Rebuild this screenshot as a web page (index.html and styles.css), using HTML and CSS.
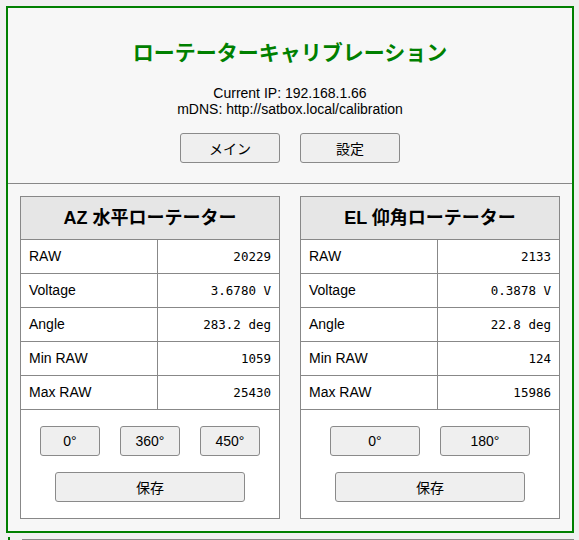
FILE: index.html
```html
<!DOCTYPE html>
<html lang="ja">
<head>
  <meta charset="UTF-8">
  <meta name='viewport' content='width=device-width, initial-scale=1' />

  <title>ローテーターキャリブレーション</title>

  <link rel="stylesheet" href="styles.css">
</head>
<body>

  <div class="Calib">
    <div class="Calib__head">
      <h1 class="Calib__title">ローテーターキャリブレーション</h1>
      <p class="Calib__info">Current IP: 192.168.1.66<br>mDNS: http://satbox.local/calibration</p>
      <div class="Calib__nav">
        <button class="Btn Btn--nav">メイン</button>
        <button class="Btn Btn--nav">設定</button>
      </div>
    </div>

    <div class="Calib__panels">
      <div class="Rotor">
        <div class="Rotor__title">AZ 水平ローテーター</div>
        <div class="Rotor__row"><span class="Rotor__label">RAW</span><span class="Rotor__value">20229</span></div>
        <div class="Rotor__row"><span class="Rotor__label">Voltage</span><span class="Rotor__value">3.6780 V</span></div>
        <div class="Rotor__row"><span class="Rotor__label">Angle</span><span class="Rotor__value">283.2 deg</span></div>
        <div class="Rotor__row"><span class="Rotor__label">Min RAW</span><span class="Rotor__value">1059</span></div>
        <div class="Rotor__row"><span class="Rotor__label">Max RAW</span><span class="Rotor__value">25430</span></div>
        <div class="Rotor__actions">
          <div class="Rotor__presets">
            <button class="Btn Btn--preset">0°</button>
            <button class="Btn Btn--preset">360°</button>
            <button class="Btn Btn--preset">450°</button>
          </div>
          <button class="Btn Btn--save">保存</button>
        </div>
      </div>

      <div class="Rotor">
        <div class="Rotor__title">EL 仰角ローテーター</div>
        <div class="Rotor__row"><span class="Rotor__label">RAW</span><span class="Rotor__value">2133</span></div>
        <div class="Rotor__row"><span class="Rotor__label">Voltage</span><span class="Rotor__value">0.3878 V</span></div>
        <div class="Rotor__row"><span class="Rotor__label">Angle</span><span class="Rotor__value">22.8 deg</span></div>
        <div class="Rotor__row"><span class="Rotor__label">Min RAW</span><span class="Rotor__value">124</span></div>
        <div class="Rotor__row"><span class="Rotor__label">Max RAW</span><span class="Rotor__value">15986</span></div>
        <div class="Rotor__actions">
          <div class="Rotor__presets">
            <button class="Btn Btn--preset Btn--wide">0°</button>
            <button class="Btn Btn--preset Btn--wide">180°</button>
          </div>
          <button class="Btn Btn--save">保存</button>
        </div>
      </div>
    </div>
  </div>

  <div class="Log">
    <div class="Log__box"></div>
  </div>

</body>
</html>
```

FILE: styles.css
```css
*,
*::before,
*::after {
  box-sizing: border-box;
}
html, body {
  padding: 0;
}
body {
  margin: 6px 5px 0 6px;
  background-color: #f0f0f0;
  font-family: "Liberation Sans", "Noto Sans CJK JP", sans-serif;
  font-size: 14px;
  color: #000;
  overflow: hidden;
}

.Calib {
  border: 2px solid #008000;
  background-color: #f7f7f7;
}
.Calib__head {
  padding: 30px 0 20px;
  border-bottom: 1px solid #888;
  text-align: center;
}
.Calib__title {
  margin: 0;
  font-size: 21px;
  line-height: 30px;
  font-weight: bold;
  color: #008000;
}
.Calib__info {
  margin: 17px 0 0;
  line-height: 16px;
}
.Calib__nav {
  display: flex;
  justify-content: center;
  gap: 20px;
  margin-top: 16px;
}

.Calib__panels {
  display: grid;
  grid-template-columns: 1fr 1fr;
  gap: 20px;
  padding: 12px;
}

.Btn {
  height: 30px;
  padding: 0;
  border: 1px solid #8a8a8a;
  border-radius: 3px;
  background-color: #efefef;
  font-family: "Liberation Sans", "Noto Sans CJK JP", sans-serif;
  font-size: 14px;
  color: #000;
}
.Btn--nav {
  width: 100px;
}
.Btn--preset {
  width: 60px;
}
.Btn--wide {
  width: 90px;
}
.Btn--save {
  width: 190px;
}

.Rotor {
  border: 1px solid #888;
  background-color: #fff;
}
.Rotor__title {
  height: 43px;
  border-bottom: 1px solid #888;
  background-color: #e6e6e6;
  font-size: 18px;
  font-weight: bold;
  line-height: 42px;
  text-align: center;
}
.Rotor__row {
  display: grid;
  grid-template-columns: 137px 1fr;
  border-bottom: 1px solid #888;
  line-height: 33px;
}
.Rotor__label {
  padding: 0 8px;
  border-right: 1px solid #888;
}
.Rotor__value {
  padding: 0 8px;
  text-align: right;
  font-family: "DejaVu Sans Mono", monospace;
  font-size: 12.5px;
}
.Rotor__actions {
  display: flex;
  flex-direction: column;
  align-items: center;
  gap: 16px;
  padding: 16px 0;
}
.Rotor__presets {
  display: flex;
  justify-content: center;
  gap: 20px;
}

.Log {
  margin: 4px -5px 0 2px;
  padding: 2px 0 0 12px;
  border-left: 2px solid #008000;
}
.Log__box {
  height: 40px;
  border-top: 1px solid #888;
  background-color: #fff;
}
```
